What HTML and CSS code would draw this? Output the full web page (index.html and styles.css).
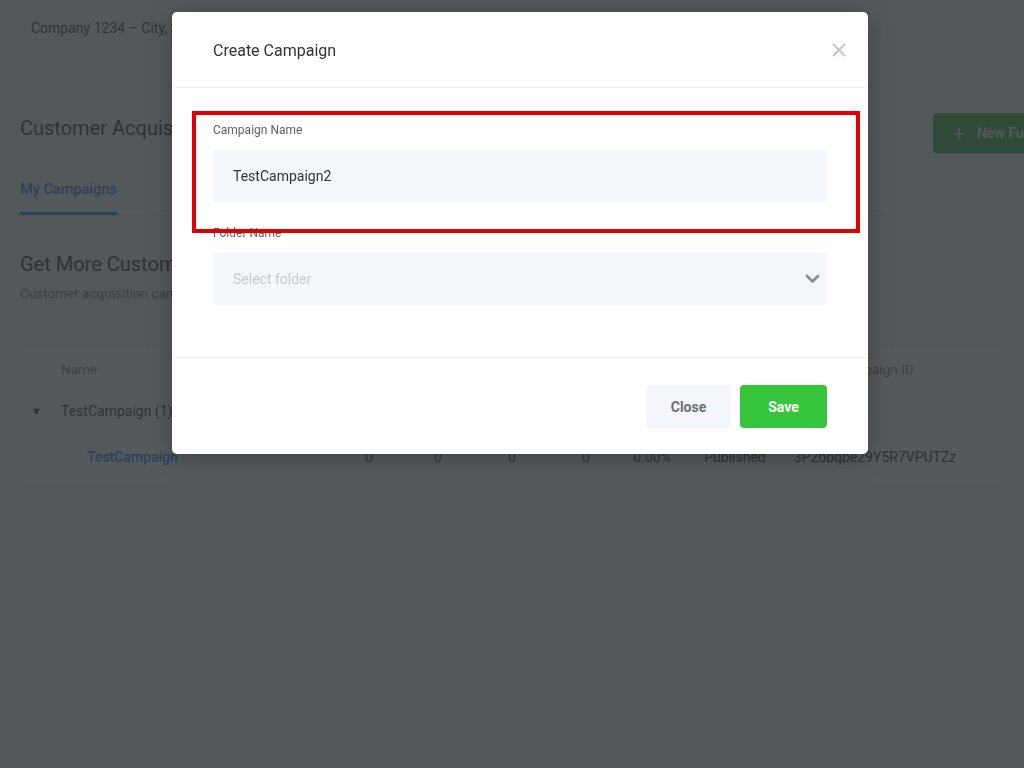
FILE: index.html
```html
<!DOCTYPE html>
<html>
<head>
<meta charset="utf-8">
<link rel="stylesheet" href="styles.css">
</head>
<body>
<div class="page">
  <header class="topbar">Company 1234 – City, State 00000</header>
  <div class="title-row">
    <h1 class="title">Customer Acquisition</h1>
    <button class="new-btn"><span class="plus">+</span> New Funnel</button>
  </div>
  <nav class="tabs">
    <a class="tab active">My Campaigns</a>
  </nav>
  <h2 class="subtitle">Get More Customers</h2>
  <p class="desc">Customer acquisition campaigns help you get more leads and customers.</p>
  <div class="card">
    <div class="row head">
      <span></span><span class="name">Name</span><span>Visitors</span><span>Leads</span><span>Optins</span><span>Sales</span><span>Rate</span><span>Status</span><span>Campaign ID</span>
    </div>
    <div class="row parent">
      <span class="arrow">▼</span><span class="name">TestCampaign (1)</span><span></span><span></span><span></span><span></span><span></span><span></span><span></span>
    </div>
    <div class="row child">
      <span></span><span class="name link">TestCampaign</span><span>0</span><span>0</span><span>0</span><span>0</span><span>0.00%</span><span>Published</span><span>3P2bbqbe29Y5R7VPUTZz</span>
    </div>
  </div>
</div>

<div class="overlay">
  <div class="modal">
    <div class="modal-header">
      <span class="modal-title">Create Campaign</span>
      <svg class="close-x" width="14" height="14" viewBox="0 0 14 14"><path d="M1.5 1.5l11 11M12.5 1.5l-11 11" stroke="#c4c6c9" stroke-width="2" stroke-linecap="round" fill="none"/></svg>
    </div>
    <div class="modal-body">
      <label class="field-label">Campaign Name</label>
      <div class="input">TestCampaign2</div>
      <label class="field-label second">Folder Name</label>
      <div class="input select">
        <span class="placeholder">Select folder</span>
        <svg width="15" height="10" viewBox="0 0 15 10"><path d="M2 2l5.5 5.5L13 2" stroke="#8a8f96" stroke-width="2.8" fill="none" stroke-linecap="round" stroke-linejoin="round"/></svg>
      </div>
    </div>
    <div class="modal-footer">
      <button class="btn btn-close">Close</button>
      <button class="btn btn-save">Save</button>
    </div>
    <div class="highlight"></div>
  </div>
</div>
</body>
</html>
```

FILE: styles.css
```css
html, body {
  margin: 0;
  padding: 0;
  overflow: hidden;
  height: 100%;
}
body {
  font-family: Roboto, "Liberation Sans", sans-serif;
  background: #f5f7f9;
  color: #333;
}
.page {
  width: 1024px;
  padding: 0 20px;
  box-sizing: border-box;
  overflow: hidden;
  height: 100%;
}
.topbar {
  height: 57px;
  line-height: 57px;
  padding-left: 11px;
  font-size: 14px;
  color: #333;
}
.title-row {
  display: flex;
  align-items: flex-start;
  justify-content: space-between;
  margin-top: 56px;
  height: 40px;
}
.title {
  margin: 0;
  font-size: 20px;
  line-height: 30px;
  font-weight: 400;
  color: #333;
}
.new-btn {
  flex-shrink: 0;
  width: 150px;
  height: 40px;
  margin-right: -79px;
  background: #3bb54a;
  border: none;
  border-radius: 3px;
  color: #fff;
  font-family: inherit;
  font-size: 14px;
  font-weight: 500;
  text-align: left;
  padding-left: 20px;
}
.plus {
  font-size: 22px;
  font-weight: 300;
  vertical-align: -3px;
  margin-right: 8px;
}
.tabs {
  margin-top: 26px;
  border-bottom: 1px solid #e3e7eb;
  width: 865px;
}
.tab {
  display: inline-block;
  font-size: 14.5px;
  font-weight: 500;
  color: #2f80ed;
  padding-bottom: 14px;
  border-bottom: 3px solid #2f80ed;
}
.subtitle {
  margin: 36px 0 0;
  font-size: 20px;
  font-weight: 400;
  color: #333;
}
.desc {
  margin: 9px 0 0;
  font-size: 13.5px;
  color: #777;
}
.card {
  margin-top: 45px;
  background: #fff;
  border-radius: 4px;
  padding-bottom: 2px;
}
.row {
  display: grid;
  grid-template-columns: 30px 274px 68px 70px 78px 70px 62px 104px 176px;
  padding-left: 11px;
  align-items: center;
  font-size: 14px;
  color: #333;
}
.row > span {
  text-align: center;
  white-space: nowrap;
}
.row > span.name {
  text-align: left;
}
.row.head {
  height: 46px;
  color: #777;
  font-size: 13.5px;
}
.row.parent {
  height: 38px;
}
.row.child {
  height: 54px;
  background: #fafbfc;
}
.arrow {
  font-size: 11px;
  color: #333;
  text-align: left !important;
}
.child .name {
  padding-left: 26px;
}
.link {
  color: #2f80ed;
  font-weight: 500;
}

.overlay {
  position: fixed;
  inset: 0;
  background: rgba(45, 51, 54, 0.81);
  padding: 12px 0 0 16px;
  box-sizing: border-box;
  display: flex;
  justify-content: center;
  align-items: flex-start;
}
.modal {
  position: relative;
  width: 696px;
  background: #fff;
  border-radius: 5px;
  box-shadow: 0 4px 24px rgba(0, 0, 0, 0.25);
}
.modal-header {
  height: 76px;
  display: flex;
  align-items: center;
  justify-content: space-between;
  padding: 0 22px 0 41px;
  border-bottom: 1px solid #eef0f3;
  box-sizing: border-box;
}
.modal-title {
  font-size: 16px;
  color: #333;
  margin-top: 1px;
}
.modal-body {
  padding: 35px 41px 52px;
  display: flex;
  flex-direction: column;
}
.field-label {
  font-size: 12px;
  line-height: 14px;
  color: #5f6368;
  margin-bottom: 13px;
}
.field-label.second {
  margin-top: 24px;
}
.input {
  height: 52px;
  background: #f3f6fa;
  border-radius: 4px;
  padding: 0 20px;
  display: flex;
  align-items: center;
  font-size: 14px;
  color: #333;
}
.select {
  justify-content: space-between;
  padding-right: 7px;
}
.placeholder {
  color: #c6cad1;
}
.modal-footer {
  border-top: 1px solid #eef0f3;
  padding: 27px 41px 26px;
  display: flex;
  justify-content: flex-end;
  gap: 9px;
}
.btn {
  height: 43px;
  border: none;
  border-radius: 4px;
  font-family: inherit;
  font-size: 14px;
  font-weight: 700;
}
.btn-close {
  width: 85px;
  background: #f3f6fa;
  color: #6b6f75;
}
.btn-save {
  width: 87px;
  background: #36c53d;
  color: #fff;
}
.highlight {
  position: absolute;
  left: 20px;
  top: 99px;
  width: 668px;
  height: 122px;
  border: 4px solid #e30000;
  box-sizing: border-box;
  pointer-events: none;
}
```
